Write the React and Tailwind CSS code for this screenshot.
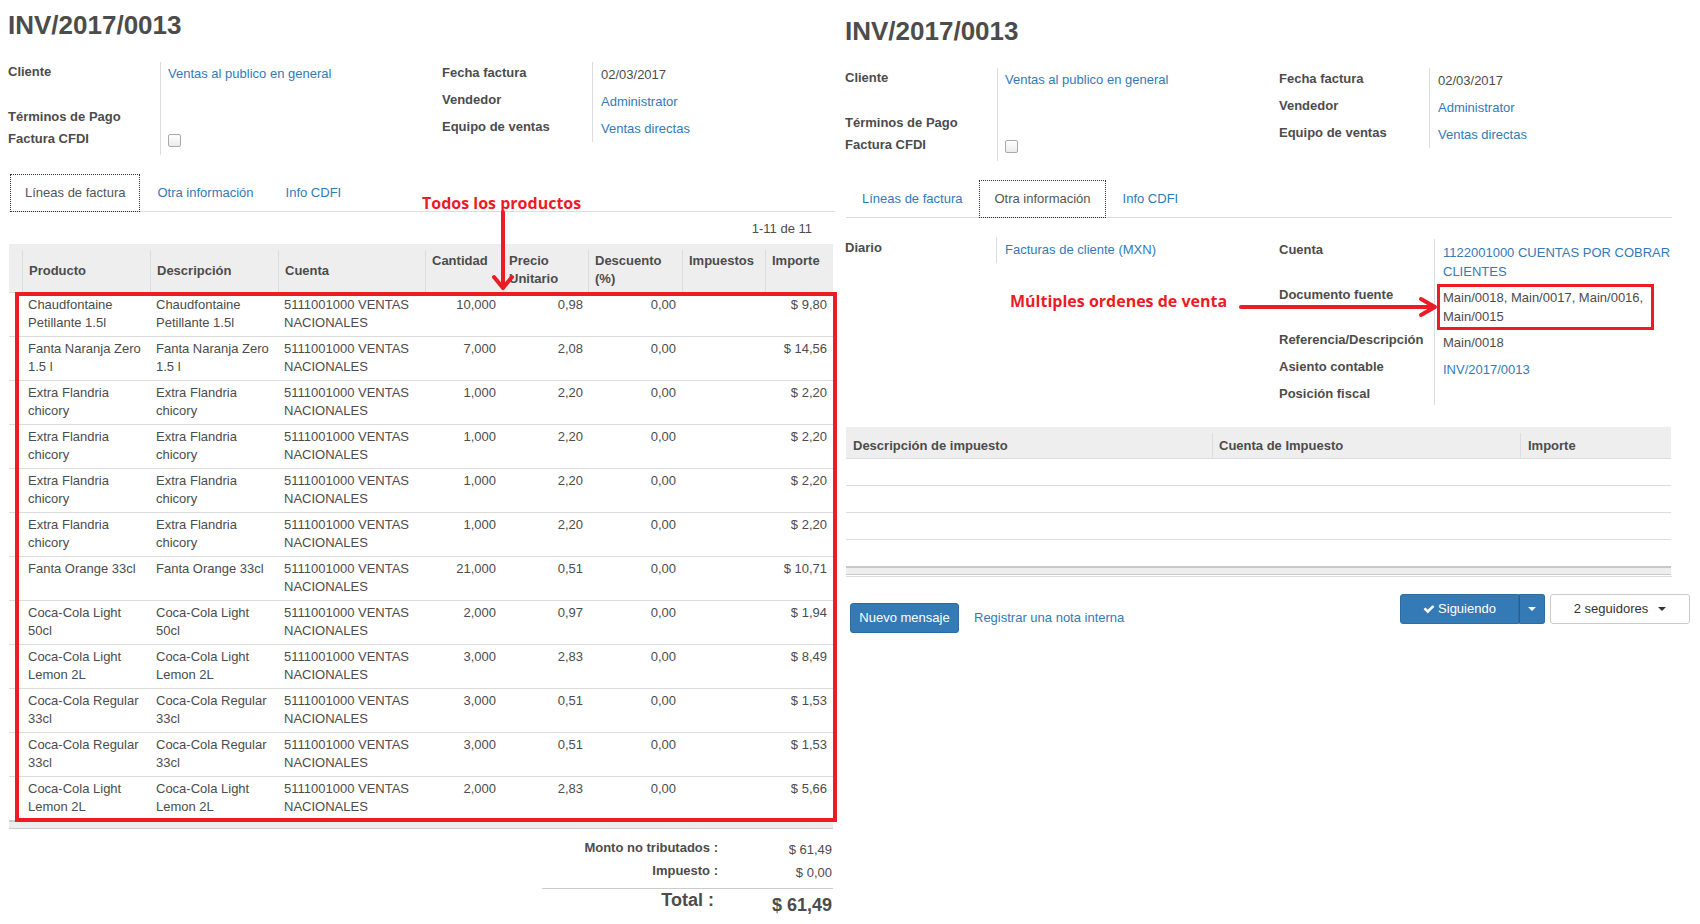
import { Fragment } from "react";

// lineas de factura
const invoiceLines = [
  { p: ["Chaudfontaine", "Petillante 1.5l"], q: "10,000", u: "0,98", t: "$ 9,80" },
  { p: ["Fanta Naranja Zero", "1.5 l"], q: "7,000", u: "2,08", t: "$ 14,56" },
  { p: ["Extra Flandria", "chicory"], q: "1,000", u: "2,20", t: "$ 2,20" },
  { p: ["Extra Flandria", "chicory"], q: "1,000", u: "2,20", t: "$ 2,20" },
  { p: ["Extra Flandria", "chicory"], q: "1,000", u: "2,20", t: "$ 2,20" },
  { p: ["Extra Flandria", "chicory"], q: "1,000", u: "2,20", t: "$ 2,20" },
  { p: ["Fanta Orange 33cl"], q: "21,000", u: "0,51", t: "$ 10,71" },
  { p: ["Coca-Cola Light", "50cl"], q: "2,000", u: "0,97", t: "$ 1,94" },
  { p: ["Coca-Cola Light", "Lemon 2L"], q: "3,000", u: "2,83", t: "$ 8,49" },
  { p: ["Coca-Cola Regular", "33cl"], q: "3,000", u: "0,51", t: "$ 1,53" },
  { p: ["Coca-Cola Regular", "33cl"], q: "3,000", u: "0,51", t: "$ 1,53" },
  { p: ["Coca-Cola Light", "Lemon 2L"], q: "2,000", u: "2,83", t: "$ 5,66" },
];

const otherRows = [
  { label: "Cuenta", value: ["1122001000 CUENTAS POR COBRAR", "CLIENTES"], link: true, h: "h-[45px]" },
  { label: "Documento fuente", value: ["Main/0018, Main/0017, Main/0016,", "Main/0015"], h: "h-[45px]" },
  { label: "Referencia/Descripción", value: ["Main/0018"], h: "h-[27px]" },
  { label: "Asiento contable", value: ["INV/2017/0013"], link: true, h: "h-[27px]" },
  { label: "Posición fiscal", value: [], h: "h-[22px]" },
];

function Lines({ lines }) {
  return lines.map((l, i) => (
    <Fragment key={i}>
      {i > 0 && <br />}
      {l}
    </Fragment>
  ));
}

function InvoiceHeader({ active }) {
  const tabs = ["Líneas de factura", "Otra información", "Info CDFI"];
  return (
    <>
      <h1 className="pt-[10px] text-[26px] leading-[31px] font-bold">INV/2017/0013</h1>

      <div className="mt-[21px] flex leading-[18px]">
        <div className="flex w-[434px] h-[93px]">
          <div className="w-[152px] font-bold">
            <div className="h-[45px] pt-[1px]">Cliente</div>
            <div className="h-[22px] pt-[1px]">Términos de Pago</div>
            <div className="pt-[1px]">Factura CFDI</div>
          </div>
          <div className="flex-1 border-l border-[#ddd] pl-[7px]">
            <div className="h-[67px] pt-[3px] text-[#337ab7]">Ventas al publico en general</div>
            <div className="pt-[5px]">
              <span className="block w-[13px] h-[13px] border border-[#a9a9a9] rounded-[2px] bg-linear-to-b from-white to-[#ebebeb]" />
            </div>
          </div>
        </div>
        <div className="flex h-[80px]">
          <div className="w-[150px] font-bold">
            <div className="h-[27px] pt-[2px]">Fecha factura</div>
            <div className="h-[27px] pt-[2px]">Vendedor</div>
            <div className="h-[27px] pt-[2px]">Equipo de ventas</div>
          </div>
          <div className="border-l border-[#ddd] pl-[8px]">
            <div className="h-[27px] pt-[4px]">02/03/2017</div>
            <div className="h-[27px] pt-[4px] text-[#337ab7]">Administrator</div>
            <div className="h-[26px] pt-[4px] text-[#337ab7]">Ventas directas</div>
          </div>
        </div>
      </div>

      <div className="ml-[1px] w-[826px] mt-[19px] flex border-b border-[#ddd] pl-[1px]">
        {tabs.map((t, i) => (
          <div
            key={t}
            className={`-mb-px mr-[2px] h-[38px] px-[14px] py-[9px] leading-[18px] border ${
              i === active ? "border-dotted border-[#333] text-[#555]" : "border-transparent text-[#337ab7]"
            }`}
          >
            {t}
          </div>
        ))}
      </div>
    </>
  );
}

function LinesTable() {
  return (
    <div className="ml-[1px] w-[824px]">
      <div className="h-[32px] pt-[8px] pr-[21px] text-right leading-[18px]">1-11 de 11</div>

      {/* cabecera */}
      <div className="flex h-[48px] bg-[#eee] pt-[6px] font-bold leading-[18px]">
        <div className="w-[13px]" />
        <div className="w-[128px] border-l border-[#ddd] pl-[6px] flex items-center">Producto</div>
        <div className="w-[128px] border-l border-[#ddd] pl-[6px] flex items-center">Descripción</div>
        <div className="w-[147px] border-l border-[#ddd] pl-[6px] flex items-center">Cuenta</div>
        <div className="w-[78px] border-l border-[#ddd] pl-[6px] pt-[2px]">Cantidad</div>
        <div className="w-[85px] border-l border-[#ddd] pl-[5px] pt-[2px]">Precio<br />Unitario</div>
        <div className="w-[94px] border-l border-[#ddd] pl-[6px] pt-[2px]">Descuento<br />(%)</div>
        <div className="w-[83px] border-l border-[#ddd] pl-[6px] pt-[2px]">Impuestos</div>
        <div className="w-[68px] border-l border-[#ddd] pl-[6px] pt-[2px]">Importe</div>
      </div>

      {invoiceLines.map((r, i) => (
        <div key={i} className="flex h-[44px] border-t border-[#ddd] pt-[3px] leading-[18px] whitespace-nowrap">
          <div className="w-[13px]" />
          <div className="w-[128px] pl-[6px]"><Lines lines={r.p} /></div>
          <div className="w-[128px] pl-[6px]"><Lines lines={r.p} /></div>
          <div className="w-[147px] pl-[6px]">5111001000 VENTAS<br />NACIONALES</div>
          <div className="w-[78px] pr-[7px] text-right">{r.q}</div>
          <div className="w-[85px] pr-[5px] text-right">{r.u}</div>
          <div className="w-[94px] pr-[6px] text-right">0,00</div>
          <div className="w-[83px]" />
          <div className="w-[68px] pr-[6px] text-right">{r.t}</div>
        </div>
      ))}

      <div className="h-[9px] border-t-2 border-b border-[#ccc] bg-[#eee]" />

      {/* totales */}
      <div className="mt-[10px] flex justify-end">
        <div className="w-[291px]">
          <div className="flex h-[23px] leading-[18px]">
            <div className="w-[176px] text-right font-bold">Monto no tributados :</div>
            <div className="w-[115px] pt-[2px] pr-[1px] text-right">$ 61,49</div>
          </div>
          <div className="flex h-[23px] leading-[18px]">
            <div className="w-[176px] text-right font-bold">Impuesto :</div>
            <div className="w-[115px] pt-[2px] pr-[1px] text-right">$ 0,00</div>
          </div>
          <div className="mt-[3px] flex border-t border-[#ccc] text-[18px] leading-[22px] font-bold">
            <div className="w-[176px] pr-[4px] text-right">Total :</div>
            <div className="w-[115px] pt-[5px] pr-[1px] text-right">$ 61,49</div>
          </div>
        </div>
      </div>
    </div>
  );
}

function OtherInfo() {
  return (
    <>
      <div className="mt-[21px] flex leading-[18px]">
        <div className="-mt-[2px] flex w-[434px] items-start">
          <div className="w-[151px] pt-[2px] font-bold">Diario</div>
          <div className="h-[26px] flex-1 border-l border-[#ddd] pl-[8px] pt-[4px] text-[#337ab7]">Facturas de cliente (MXN)</div>
        </div>
        <div>
          {otherRows.map((r) => (
            <div key={r.label} className={`flex ${r.h}`}>
              <div className="w-[155px] pt-[2px] font-bold whitespace-nowrap">{r.label}</div>
              <div className={`w-[236px] border-l border-[#ddd] pl-[8px] pt-[4px] leading-[19px] whitespace-nowrap ${r.link ? "text-[#337ab7]" : ""}`}>
                <Lines lines={r.value} />
              </div>
            </div>
          ))}
        </div>
      </div>

      <div className="ml-[1px] w-[825px] mt-[22px]">
        <div className="flex h-[31px] bg-[#eee] pt-[6px] font-bold leading-[18px]">
          <div className="w-[366px] pl-[7px] pt-[4px]">Descripción de impuesto</div>
          <div className="w-[308px] border-l border-[#ddd] pl-[6px] pt-[4px]">Cuenta de Impuesto</div>
          <div className="flex-1 border-l border-[#ddd] pl-[7px] pt-[4px]">Importe</div>
        </div>
        {[0, 1, 2, 3].map((i) => (
          <div key={i} className="h-[27px] border-t border-[#ddd]" />
        ))}
        <div className="h-[9px] border-t-2 border-t-[#c8c8c8] border-b border-b-[#ccc] bg-[#eee]" />
        <div className="mt-[1px] w-[826px] border-t border-[#ddd]" />
      </div>
    </>
  );
}

function CheckIcon() {
  return (
    <svg viewBox="0 0 1792 1792" className="w-[12px] h-[12px] fill-white">
      <path d="M1671 566q0 40-28 68l-724 724-136 136q-28 28-68 28t-68-28l-136-136-362-362q-28-28-28-68t28-68l136-136q28-28 68-28t68 28l294 295 656-657q28-28 68-28t68 28l136 136q28 28 28 68z" />
    </svg>
  );
}

function Chatter() {
  return (
    <div className="mt-[17px] flex items-start justify-between pl-[5px] pr-[10px]">
      <div className="mt-[9px] flex items-center">
        <div className="flex h-[30px] w-[109px] items-center justify-center rounded-[3px] border border-[#2e6da4] bg-[#337ab7] text-white">
          Nuevo mensaje
        </div>
        <div className="ml-[15px] text-[#337ab7]">Registrar una nota interna</div>
      </div>
      <div className="flex">
        <div className="flex h-[30px] w-[119px] items-center justify-center gap-[3px] rounded-l-[3px] border border-[#2e6da4] bg-[#337ab7] text-white">
          <CheckIcon />
          <span>Siguiendo</span>
        </div>
        <div className="flex h-[30px] w-[26px] items-center justify-center rounded-r-[3px] border-y border-r border-[#2e6da4] border-l border-l-[#265f91] bg-[#337ab7]">
          <span className="border-x-[4px] border-t-[4px] border-x-transparent border-t-white" />
        </div>
        <div className="ml-[5px] flex h-[30px] w-[140px] items-center justify-center gap-[10px] rounded-[3px] border border-[#ccc] bg-white text-[#333]">
          <span>2 seguidores</span>
          <span className="border-x-[4px] border-t-[4px] border-x-transparent border-t-[#333]" />
        </div>
      </div>
    </div>
  );
}

export default function App() {
  return (
    <div className="flex w-[1700px] h-[924px] overflow-hidden bg-white font-['Liberation_Sans',Arial,sans-serif] text-[13px] text-[#4c4c4c]">
      {/* Lineas de factura */}
      <div className="relative w-[837px] shrink-0 pl-[8px]">
        <InvoiceHeader active={0} />
        <LinesTable />

        <div className="absolute left-[422px] top-[193px] font-['Open_Sans',sans-serif] text-[16px] leading-[20px] font-bold text-[#ed1c24] whitespace-nowrap">
          Todos los productos
        </div>
        <svg className="absolute left-[490px] top-[208px] w-[26px] h-[86px]" viewBox="0 0 26 86" fill="none" stroke="#ed1c24" strokeWidth="4" strokeLinecap="round" strokeLinejoin="round">
          <path d="M13 4 V79" />
          <path d="M4 69 L13 80 L22 69" />
        </svg>
        <div className="absolute left-[15px] top-[292px] w-[822px] h-[530px] border-4 border-[#ed1c24]" />
      </div>

      {/* Otra informacion */}
      <div className="relative flex-1 pl-[8px] pt-[6px]">
        <InvoiceHeader active={1} />
        <OtherInfo />
        <Chatter />

        <div className="absolute left-[173px] top-[291px] font-['Open_Sans',sans-serif] text-[16px] leading-[20px] font-bold text-[#ed1c24] whitespace-nowrap">
          Múltiples ordenes de venta
        </div>
        <svg className="absolute left-[400px] top-[296px] w-[202px] h-[22px]" viewBox="0 0 202 22" fill="none" stroke="#ed1c24" strokeWidth="4" strokeLinecap="round" strokeLinejoin="round">
          <path d="M4 11 H197" />
          <path d="M184 3 L198 11 L184 19" />
        </svg>
        <div className="absolute left-[600px] top-[284px] w-[217px] h-[46px] border-[3px] border-[#ed1c24]" />
      </div>
    </div>
  );
}
